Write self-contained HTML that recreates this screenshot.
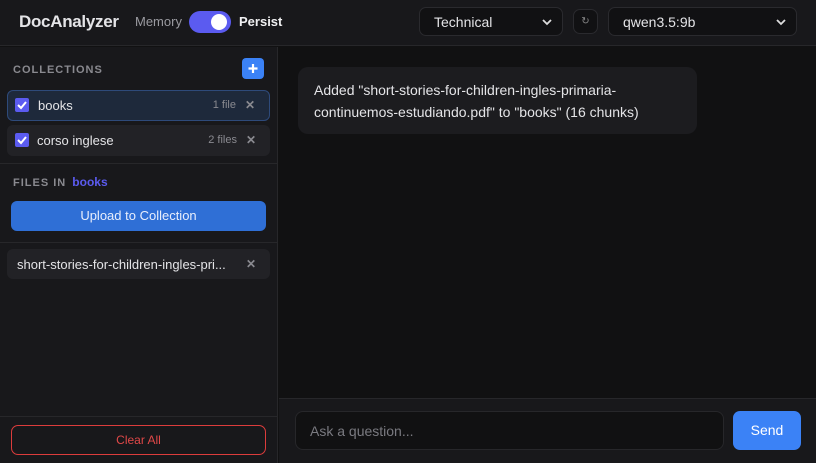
<!DOCTYPE html>
<html><head><style>
*{box-sizing:border-box;margin:0;padding:0}
body{width:816px;height:463px;background:#111112;font-family:"Liberation Sans",sans-serif;color:#e4e4e7;position:relative;overflow:hidden}
.abs{position:absolute}
#hdr{left:0;top:0;width:816px;height:46px;background:#18181b;border-bottom:1px solid #27272a}
#side{left:0;top:47px;width:278px;height:416px;background:#18181b;border-right:1px solid #27272a}
.sel{border:1px solid #2a2a2e;background:#111113;border-radius:7px;color:#e4e4e7;font-size:14px}
.chev{position:absolute;right:10px;top:10px}
.item{position:absolute;left:7px;width:263px;height:31px;border-radius:6px;background:#222226;font-size:13px}
.cb{position:absolute;left:8px;top:8px;width:14px;height:14px;background:#5b5bf0;border-radius:2px}
.x{position:absolute;right:14px;top:8px;color:#8a8a90;font-size:12px;font-weight:bold}
.cnt{position:absolute;right:33px;top:9px;color:#8a8a90;font-size:11px}
</style></head><body>
<div id="hdr" class="abs">
 <div class="abs" style="left:19px;top:12px;font-size:17px;font-weight:bold;color:#e4e4e7;letter-spacing:-0.3px">DocAnalyzer</div>
 <div class="abs" style="left:135px;top:14px;font-size:13px;color:#9a9aa0">Memory</div>
 <div class="abs" style="left:189px;top:11px;width:42px;height:22px;border-radius:11px;background:#5b5bf0"><div class="abs" style="left:22px;top:3px;width:16px;height:16px;border-radius:50%;background:#fff"></div></div>
 <div class="abs" style="left:239px;top:14px;font-size:13px;font-weight:bold;color:#f0f0f2">Persist</div>
 <div class="abs sel" style="left:419px;top:7px;width:144px;height:29px"><span class="abs" style="left:14px;top:6px">Technical</span><svg class="chev" width="10" height="8" viewBox="0 0 10 8"><path d="M1 2l4 4 4-4" stroke="#ddd" stroke-width="1.8" fill="none"/></svg></div>
 <div class="abs sel" style="left:573px;top:9px;width:25px;height:25px;font-size:10px;color:#888;text-align:center;line-height:23px">↻</div>
 <div class="abs sel" style="left:608px;top:7px;width:189px;height:29px"><span class="abs" style="left:14px;top:6px">qwen3.5:9b</span><svg class="chev" width="10" height="8" viewBox="0 0 10 8"><path d="M1 2l4 4 4-4" stroke="#ddd" stroke-width="1.8" fill="none"/></svg></div>
</div>
<div id="side" class="abs">
 <div class="abs" style="left:13px;top:17px;font-size:11px;font-weight:bold;letter-spacing:1px;color:#8a8a90">COLLECTIONS</div>
 <div class="abs" style="left:242px;top:11px;width:22px;height:21px;background:#3b82f6;border-radius:4px"><svg width="22" height="21"><path d="M11 6v9M6.5 10.5h9" stroke="#fff" stroke-width="2.2"/></svg></div>
 <div class="item" style="top:43px;background:#1e293b;border:1px solid #2e4a7a"><div class="cb" style="left:7px;top:7px"><svg width="14" height="14"><path d="M3 7l3 3 5-6" stroke="#fff" stroke-width="2" fill="none"/></svg></div><span class="abs" style="left:30px;top:7px">books</span><span class="cnt" style="top:8px">1 file</span><span class="x" style="top:7px">✕</span></div>
 <div class="item" style="top:78px"><div class="cb"><svg width="14" height="14"><path d="M3 7l3 3 5-6" stroke="#fff" stroke-width="2" fill="none"/></svg></div><span class="abs" style="left:30px;top:8px">corso inglese</span><span class="cnt">2 files</span><span class="x">✕</span></div>
 <div class="abs" style="left:0;top:116px;width:278px;border-top:1px solid #27272a"></div>
 <div class="abs" style="left:13px;top:128px;font-size:11px;font-weight:bold;letter-spacing:1px;color:#8a8a90">FILES IN <span style="color:#5b5bf0;letter-spacing:0;font-size:12px;margin-left:2px">books</span></div>
 <div class="abs" style="left:11px;top:154px;width:255px;height:30px;background:#2f6fd6;border-radius:6px;color:#e8eefc;font-size:13px;text-align:center;line-height:30px">Upload to Collection</div>
 <div class="abs" style="left:0;top:195px;width:278px;border-top:1px solid #27272a"></div>
 <div class="item" style="top:202px;height:30px"><span class="abs" style="left:10px;top:8px">short-stories-for-children-ingles-pri...</span><span class="x">✕</span></div>
 <div class="abs" style="left:0;top:369px;width:278px;border-top:1px solid #27272a"></div>
 <div class="abs" style="left:11px;top:378px;width:255px;height:30px;border:1px solid #dc3c3c;border-radius:7px;color:#e04848;font-size:12px;text-align:center;line-height:28px">Clear All</div>
</div>
<div class="abs" style="left:298px;top:67px;width:399px;height:67px;background:#1c1c1f;border-radius:10px;font-size:14px;line-height:22px;padding:12px 15px 12px 16px;color:#e4e4e7">Added "short-stories-for-children-ingles-primaria-continuemos-estudiando.pdf" to "books" (16 chunks)</div>
<div class="abs" style="left:279px;top:398px;width:537px;height:65px;background:#18181b;border-top:1px solid #27272a"></div>
<div class="abs" style="left:295px;top:411px;width:429px;height:39px;background:#111112;border:1px solid #27272a;border-radius:8px;font-size:14px;color:#7a7a80;padding:11px 14px">Ask a question...</div>
<div class="abs" style="left:733px;top:411px;width:68px;height:39px;background:#3b82f6;border-radius:7px;color:#fff;font-size:14px;text-align:center;line-height:39px">Send</div>
</body></html>
